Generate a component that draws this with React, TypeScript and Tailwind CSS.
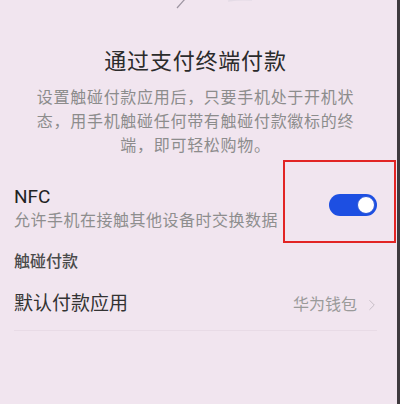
import { ChevronRight } from "lucide-react";

const cjk = { fontFamily: "Roboto, 'Noto Sans CJK SC', sans-serif" };

function Toggle() {
  return (
    <div className="mt-[9px] flex h-[22px] w-[48px] shrink-0 items-center justify-end rounded-full bg-[#1d4fe2] pr-[2px]">
      <div className="h-[18px] w-[18px] rounded-full border border-[#2a56d8] bg-white" />
    </div>
  );
}

export default function App() {
  return (
    <div className="flex h-[404px] w-[400px] overflow-hidden bg-[#f1e5ef]" style={cjk}>
      <div className="relative flex w-[397px] flex-col pl-[14px] pr-[20px]">
        {/* edge of the illustration above */}
        <svg className="-ml-[14px] h-[10px] w-[397px] shrink-0" viewBox="0 0 397 10">
          <path d="M185 -1 L177 8" stroke="#9c94a0" strokeWidth="1.2" fill="none" />
          <path d="M228 1 Q240 -1 252 0" stroke="#e4dbe6" strokeWidth="1.5" fill="none" />
        </svg>

        <h1 className="mt-[37px] text-center text-[22px] leading-[30px] tracking-[0.8px] text-[#2b2b2b]">
          通过支付终端付款
        </h1>
        <p className="mt-[9px] px-[22px] text-center text-[16px] leading-[24px] tracking-[0.7px] text-[#8c8c8c]">
          设置触碰付款应用后，只要手机处于开机状态，用手机触碰任何带有触碰付款徽标的终端，即可轻松购物。
        </p>

        <div className="mt-[27px] flex items-start justify-between">
          <div>
            <div className="text-[19px] leading-[24px] text-[#222]">NFC</div>
            <div className="text-[16px] leading-[24px] tracking-[0.5px] text-[#8e8e8e]">
              允许手机在接触其他设备时交换数据
            </div>
          </div>
          <Toggle />
        </div>

        <div className="mt-[18px] text-[16px] font-medium leading-[22px] text-[#4a4a4a]">触碰付款</div>

        <div className="mt-[6px] flex h-[52px] items-center justify-between border-b border-[#e8dbe6]">
          <span className="text-[19px] text-[#333]">默认付款应用</span>
          <span className="flex items-center gap-[6px] text-[16px] text-[#9a9a9a]">
            华为钱包
            <ChevronRight className="-mr-[4px] h-[18px] w-[18px] text-[#c4bcc4]" strokeWidth={1.3} />
          </span>
        </div>

        {/* highlight box drawn over the switch */}
        <div className="absolute left-[283px] top-[160px] h-[83px] w-[113px] border-2 border-[#e22424]" />
      </div>
      <div className="w-[3px] bg-[#3e3a3e]" />
    </div>
  );
}
